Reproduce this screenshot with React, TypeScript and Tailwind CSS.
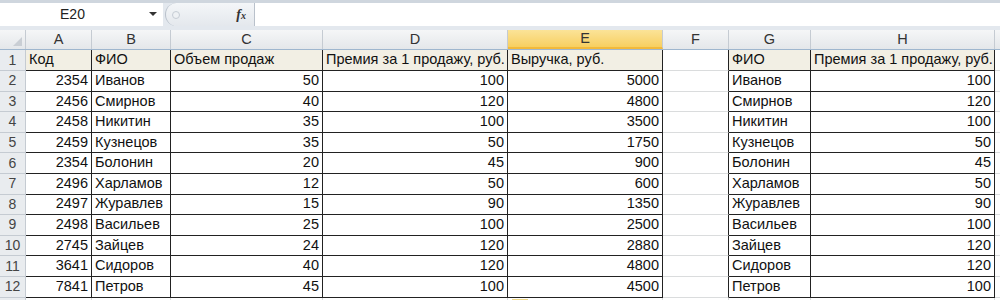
const cols = [
  { key: "A", w: "w-[66px]" },
  { key: "B", w: "w-[79px]" },
  { key: "C", w: "w-[152px]" },
  { key: "D", w: "w-[185px]" },
  { key: "E", w: "w-[155px]" },
  { key: "F", w: "w-[66px]" },
  { key: "G", w: "w-[82px]" },
  { key: "H", w: "w-[184px]" },
];

const header = ["Код", "ФИО", "Объем продаж", "Премия за 1 продажу, руб.", "Выручка, руб.", "", "ФИО", "Премия за 1 продажу, руб."];

const data: (string | number)[][] = [
  [2354, "Иванов", 50, 100, 5000, "", "Иванов", 100],
  [2456, "Смирнов", 40, 120, 4800, "", "Смирнов", 120],
  [2458, "Никитин", 35, 100, 3500, "", "Никитин", 100],
  [2459, "Кузнецов", 35, 50, 1750, "", "Кузнецов", 50],
  [2354, "Болонин", 20, 45, 900, "", "Болонин", 45],
  [2496, "Харламов", 12, 50, 600, "", "Харламов", 50],
  [2497, "Журавлев", 15, 90, 1350, "", "Журавлев", 90],
  [2498, "Васильев", 25, 100, 2500, "", "Васильев", 100],
  [2745, "Зайцев", 24, 120, 2880, "", "Зайцев", 120],
  [3641, "Сидоров", 40, 120, 4800, "", "Сидоров", 120],
  [7841, "Петров", 45, 100, 4500, "", "Петров", 100],
];

function Cell({ idx, value, first }: { idx: number; value: string | number; first?: boolean }) {
  const col = cols[idx];
  const isF = col.key === "F";
  const num = typeof value === "number";
  return (
    <div
      className={`${col.w} shrink-0 h-full border-b border-r px-[3px] flex items-center overflow-hidden whitespace-nowrap ${
        num ? "justify-end" : "justify-start"
      } ${isF ? "border-b-[#dadcdd] border-r-[#222]" : "border-[#222]"} ${first && !isF ? "bg-[#f2efe4]" : "bg-white"}`}
    >
      {value}
    </div>
  );
}

export default function App() {
  return (
    <div className="w-[1000px] h-[300px] overflow-hidden bg-white text-[#111] text-[14.5px]" style={{ fontFamily: '"Liberation Sans", Arial, sans-serif' }}>
      {/* formula bar */}
      <div className="h-[30px] bg-[#e3e8ee] border-t-[3px] border-[#cfd6de] flex items-start">
        <div className="w-[163px] h-[23px] bg-white flex items-center relative">
          <span className="w-full text-center pr-[18px] text-[14px] text-[#222]">E20</span>
          <span className="absolute left-[149px] top-[9px] w-0 h-0 border-l-[4px] border-r-[4px] border-t-[4px] border-l-transparent border-r-transparent border-t-[#333]" />
        </div>
        <div className="w-[89px] h-[23px] ml-[2px] bg-gradient-to-b from-[#f4f6f8] to-[#e4e8ed] rounded-l-[12px] border-l border-[#b9c1cb] flex items-center justify-between pl-[6px] pr-[8px]">
          <span className="w-[8px] h-[8px] rounded-full border border-[#c5ccd4] bg-[#eef1f4]" />
          <span className="text-[14px] italic font-bold text-[#333]" style={{ fontFamily: '"Liberation Serif", serif' }}>
            f<span className="text-[10px]">x</span>
          </span>
        </div>
        <div className="flex-1 h-[23px] bg-white border-l border-[#b9c1cb]" />
      </div>

      {/* column headers */}
      <div className="h-[20px] flex bg-gradient-to-b from-[#f5f6f7] to-[#e4e7ea] border-b border-[#9eb6ce] text-[#333]">
        <div className="w-[26px] shrink-0 border-r border-[#c5cbd2] flex items-end justify-end p-[3px]">
          <span className="w-0 h-0 border-b-[9px] border-l-[9px] border-b-[#c9ced4] border-l-transparent" />
        </div>
        {cols.map((c) => (
          <div
            key={c.key}
            className={`${c.w} shrink-0 border-r border-[#c5cbd2] flex items-center justify-center ${
              c.key === "E" ? "bg-gradient-to-b from-[#fbe397] to-[#f7cf5f] border-b-2 border-b-[#f2b93a]" : ""
            }`}
          >
            {c.key}
          </div>
        ))}
        <div className="flex-1" />
      </div>

      {/* rows */}
      {[header, ...data].map((row, r) => (
        <div key={r} className={`${r === 0 ? "h-[21px]" : "h-[20.6px]"} flex`}>
          <div className="w-[26px] shrink-0 h-full bg-[#e9ecef] border-r border-b border-[#c5cbd2] flex items-center justify-center text-[#444] text-[14px]">
            {r + 1}
          </div>
          {row.map((v, i) => (
            <Cell key={i} idx={i} value={v} first={r === 0} />
          ))}
          <div className="flex-1 border-b border-[#dadcdd]" />
        </div>
      ))}
      <div className="h-[20px] flex">
        <div className="w-[26px] shrink-0 h-full bg-[#e9ecef] border-r border-[#c5cbd2]" />
        {cols.map((c) => (
          <div key={c.key} className={`${c.w} shrink-0 h-full border-r border-[#dadcdd] ${c.key === "E" ? "relative" : ""}`}>
            {c.key === "E" && <span className="absolute left-[4px] top-[1px] w-[16px] h-[10px] bg-[#fbf0c4] border border-[#efd98a]" />}
          </div>
        ))}
      </div>
    </div>
  );
}
